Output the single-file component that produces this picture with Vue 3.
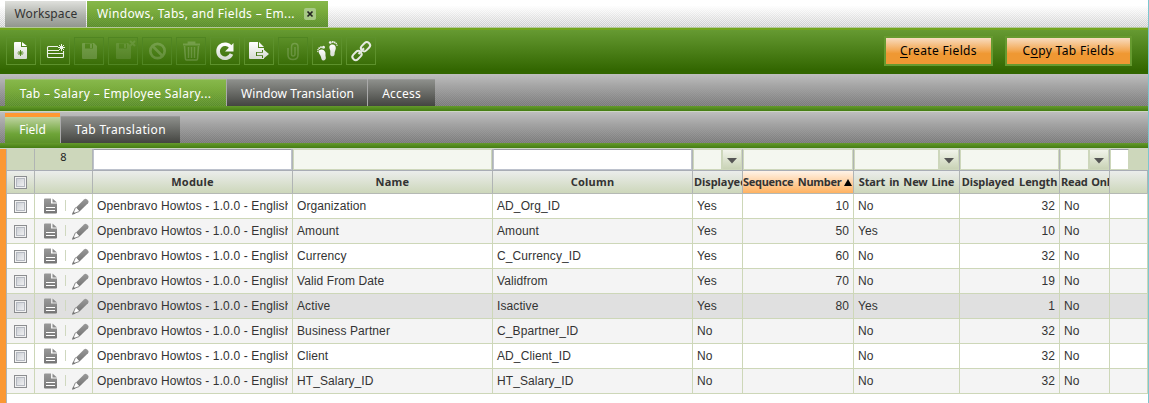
<script setup>
const tools = [
  { id: 'new', on: true },
  { id: 'newrow', on: true },
  { id: 'save', on: false },
  { id: 'saveclose', on: false },
  { id: 'undo', on: false },
  { id: 'trash', on: false },
  { id: 'refresh', on: true },
  { id: 'export', on: true },
  { id: 'attach', on: false },
  { id: 'audit', on: true },
  { id: 'link', on: true }
]
const columns = [
  { label: 'Module', filter: 'white', cls: 'h-module' },
  { label: 'Name', filter: 'off', cls: 'h-name' },
  { label: 'Column', filter: 'white', cls: 'h-column' },
  { label: 'Displayed', filter: 'select', cls: 'h-left' },
  { label: 'Sequence Number', filter: 'off', cls: 'h-sort' },
  { label: 'Start in New Line', filter: 'select', cls: 'h-start' },
  { label: 'Displayed Length', filter: 'off', cls: 'h-length' },
  { label: 'Read Only', filter: 'select', cls: 'h-left h-read' }
]
const mod = 'Openbravo Howtos - 1.0.0 - English'
const rows = [
  ['Organization', 'AD_Org_ID', 'Yes', '10', 'No', '32', 'No'],
  ['Amount', 'Amount', 'Yes', '50', 'Yes', '10', 'No'],
  ['Currency', 'C_Currency_ID', 'Yes', '60', 'No', '32', 'No'],
  ['Valid From Date', 'Validfrom', 'Yes', '70', 'No', '19', 'No'],
  ['Active', 'Isactive', 'Yes', '80', 'Yes', '1', 'No'],
  ['Business Partner', 'C_Bpartner_ID', 'No', '', 'No', '32', 'No'],
  ['Client', 'AD_Client_ID', 'No', '', 'No', '32', 'No'],
  ['HT_Salary_ID', 'HT_Salary_ID', 'No', '', 'No', '32', 'No']
]
</script>

<template>
  <div class="app">
    <svg class="defs" width="0" height="0">
      <defs>
        <linearGradient id="gw" x1="0" y1="0" x2="0" y2="1">
          <stop offset="0" stop-color="#fff" /><stop offset="1" stop-color="#d6dbd2" />
        </linearGradient>
        <linearGradient id="gg" x1="0" y1="0" x2="0" y2="1">
          <stop offset="0" stop-color="#999" /><stop offset="1" stop-color="#757575" />
        </linearGradient>
      </defs>
    </svg>
    <div class="strip top">
      <div class="tab workspace">Workspace</div>
      <div class="tab active main">
        <span>Windows, Tabs, and Fields – Em...</span>
        <svg class="close" width="12" height="12"><rect width="12" height="12" rx="2" fill="#a7c986" /><path d="M3.500 3.500l5 5M8.500 3.500l-5 5" stroke="#222" stroke-width="1.700" /></svg>
      </div>
    </div>
    <div class="toolbar">
      <div class="tools">
        <div v-for="t in tools" :key="t.id" class="tool" :class="{ off: !t.on, faint: t.id === 'saveclose' }">
          <svg width="28" height="26" viewBox="0 0 28 26">
            <g v-if="t.id === 'new'">
              <path d="M8 4h6v5h6v11q0 1-1 1H8q-1 0-1-1V5q0-1 1-1z" fill="url(#gw)" />
              <path d="M15 4l5 4h-5z" fill="#fff" />
              <path d="M13.500 12v6M10.500 15h6M11.500 13l4 4M15.500 13l-4 4" stroke="#47800f" stroke-width=".9" />
            </g>
            <g v-else-if="t.id === 'newrow'" fill="none" stroke="#eef2e9">
              <path d="M17 8.500H7.500q-1 0-1 1v9q0 1 1 1h14q1 0 1-1V13" stroke-width="1.100" />
              <path d="M6.500 12.500H18M6.500 15.500h16" stroke-width="1.100" />
              <path d="M20.500 6v7M17 9.500h7M18 7l5 5M23 7l-5 5" stroke-width="1" />
            </g>
            <g v-else-if="t.id === 'save' || t.id === 'saveclose'" fill="#fff">
              <path fill-rule="evenodd" d="M7 6q0-1 1-1h11l3 3v12q0 1-1 1H8q-1 0-1-1zM10 5.500v5h8v-5z" />
              <path d="M15 6h2v4h-2z" />
              <path v-if="t.id === 'saveclose'" d="M21 3l5 5M26 3l-5 5" stroke="#fff" stroke-width="2" />
            </g>
            <g v-else-if="t.id === 'undo'" fill="none" stroke="#fff" stroke-width="2.700">
              <circle cx="14.500" cy="13" r="7.200" /><path d="M9.500 8l10 10" />
            </g>
            <g v-else-if="t.id === 'trash'" fill="none" stroke="#fff">
              <path d="M6 6.500h17M11.500 6V4.500h6V6" stroke-width="1.800" />
              <path d="M7.500 8l1 13q0 1 1 1h10q1 0 1-1l1-13" stroke-width="1.600" />
              <path d="M11.500 9v11M14.500 9v11M17.500 9v11" stroke-width="1.500" />
            </g>
            <g v-else-if="t.id === 'refresh'">
              <path d="M20 9.500A7 7 0 1 0 20.500 16" fill="none" stroke="url(#gw)" stroke-width="3.600" />
              <path d="M22.500 5v8.500H14z" fill="#f7f8f6" />
            </g>
            <g v-else-if="t.id === 'export'" fill="url(#gw)">
              <path fill-rule="evenodd" d="M5 4h8v6h6v2h-2v2h-6v4h6v2h2v1H5q-1 0-1-1V5q0-1 1-1z" />
              <path d="M14 4l5 5h-5zM12 14.800h6V11l6 5-6 5v-3.700h-6z" />
            </g>
            <path v-else-if="t.id === 'attach'" d="M16 9v7q0 2-1.800 2T12.500 16V9q0-3.500 3.300-3.500T19 9v8q0 4.500-5 4.500T9 17V10" fill="none" stroke="#fff" stroke-width="1.500" />
            <g v-else-if="t.id === 'audit'" fill="url(#gw)">
              <path d="M17.500 7c3-1.300 5.500.5 5.300 3.200-.2 2-1.300 3.300-1.200 5.500.1 3.300-4.500 3.600-4.400.3 0-2 .5-3-.5-5-.6-1.600-.4-3.400.8-4z" />
              <path d="M6.500 12c2.500-1.500 5 0 5.800 2.300.5 1.700-.2 2.700.5 5 .8 3.200-3.600 4.700-4.400 1.500-.4-2-.6-2.700-1.800-4.500-1.200-1.700-1.400-3.500-.1-4.300z" />
              <circle cx="17.300" cy="4.600" r="1.400" /><circle cx="19.800" cy="4" r="1" /><circle cx="21.700" cy="4.500" r=".9" /><circle cx="23.200" cy="5.600" r=".8" /><circle cx="24" cy="7.300" r=".7" />
              <circle cx="10.500" cy="9.200" r="1.500" /><circle cx="8" cy="9.200" r="1" /><circle cx="6.200" cy="10.200" r=".9" /><circle cx="5" cy="11.800" r=".8" /><circle cx="4.800" cy="13.600" r=".7" />
            </g>
            <g v-else fill="none" stroke="#e6eae2" stroke-width="2">
              <rect x="-5" y="-3.200" width="10" height="6.400" rx="3" transform="translate(18.500 8.700) rotate(-45)" />
              <rect x="-5" y="-3.200" width="10" height="6.400" rx="3" transform="translate(10 17.500) rotate(-45)" />
              <path d="M11.500 16l5.500-5.700" />
            </g>
          </svg>
        </div>
      </div>
      <div class="actions">
        <button class="btn create"><u>C</u>reate Fields</button>
        <button class="btn copy">C<u>o</u>py Tab Fields</button>
      </div>
    </div>
    <div class="strip gray second">
      <div class="tab active salary">Tab – Salary – Employee Salary...</div>
      <div class="tab dark wt">Window Translation</div>
      <div class="tab dark access">Access</div>
    </div>
    <div class="bar"></div>
    <div class="strip gray third">
      <div class="tab field">Field</div>
      <div class="tab dark tt">Tab Translation</div>
    </div>
    <div class="bar"></div>
    <div class="body">
      <div class="accent"></div>
      <div class="grid">
        <div class="row filters">
          <div class="c"></div>
          <div class="c count">8</div>
          <div v-for="c in columns" :key="c.label" class="c" :class="'f-' + c.filter">
            <div class="input"></div>
            <div v-if="c.filter === 'select'" class="drop"><svg width="10" height="6"><path d="M0 0h10L5 5.500z" fill="#555" /></svg></div>
          </div>
          <div class="c f-end"><div class="input"></div></div>
        </div>
        <div class="row head">
          <div class="c chk"><i class="box"></i></div>
          <div class="c"></div>
          <div v-for="c in columns" :key="c.label" class="c" :class="c.cls">
            <span>{{ c.label }}</span>
            <svg v-if="c.cls === 'h-sort'" width="8" height="7"><path d="M0 7L4 0l4 7z" fill="#000" /></svg>
          </div>
          <div class="c last"></div>
        </div>
        <div v-for="(r, i) in rows" :key="i" class="row data" :class="{ alt: i % 2 === 1, hover: i === 4 }">
          <div class="c chk"><i class="box"></i></div>
          <div class="c icons">
            <svg width="58" height="24">
              <path d="M10 4.500h6v5h6v9q0 1-1 1H10q-1 0-1-1v-13q0-1 1-1z" fill="url(#gg)" />
              <path d="M17.500 4.500l4.500 4h-4.500z" fill="#8d8d8d" />
              <path d="M11 13.500h9M11 16.500h9" stroke="#fff" />
              <path d="M30.500 6v11" stroke="#cfd8bf" />
              <path d="M41 13.500l8-8q1.500-1.300 3 0l1 1q1.300 1.400 0 2.700L44.500 17.500z" fill="url(#gg)" />
              <path d="M40.500 13.500l-2.700 6.300 6.500-2.300" fill="#fff" stroke="#888" stroke-width="1" /><path d="M37 20.800l1.200-3.300 2.300 2.200z" fill="#777" />
            </svg>
          </div>
          <div class="c mod"><span>{{ mod }}</span></div>
          <div v-for="(v, j) in r" :key="j" class="c" :class="{ num: j === 3 || j === 5 }">{{ v }}</div>
          <div class="c"></div>
        </div>
      </div>
    </div>
    <div class="edge"></div>
  </div>
</template>

<style>
html, body { margin: 0; overflow: hidden; background: #fff; }
</style>
<style scoped>
* { box-sizing: border-box; }
.app { position: relative; width: 1149px; height: 403px; overflow: hidden; background: #fff; font-family: "Noto Sans", "Open Sans", sans-serif; font-size: 12px; color: #333; }
.defs { position: absolute; }
.edge { position: absolute; right: 0; top: 0; width: 1px; height: 403px; background: #7cc6cf; }
.strip { display: flex; padding-left: 5px; white-space: nowrap; }
.top { height: 28px; align-items: flex-end; gap: 1px; border-bottom: 1px solid #b5c79a;
  background: linear-gradient(#fff 20%, rgba(255,255,255,.1)), repeating-conic-gradient(#c4c4c4 0 25%, #e6e6e6 0 50%) 0 0 / 2px 2px; }
.top .tab { height: 26px; line-height: 25px; }
.tab { color: #fff; text-align: center; }
.workspace { width: 81px; padding-left: 1px; background: linear-gradient(#dfe0dc, #b0b3ad 55%, #92968e); color: #333; letter-spacing: .1px; }
.active { background: linear-gradient(#87b84b, rgba(122,172,60,.95) 40%, rgba(88,140,40,.55)), repeating-conic-gradient(#5b8a2c 0 25%, #7aa750 0 50%) 0 0 / 2px 2px; }
.main { width: 241px; display: flex; align-items: center; padding-left: 10px; letter-spacing: .35px; }
.main span { width: 207px; text-align: left; margin-top: -1px; }
.close { margin-top: -1px; }
.toolbar { height: 46px; display: flex; justify-content: space-between; align-items: flex-start; padding: 6px 17px 0 6px; border-top: 2px solid #73a51c; background: linear-gradient(#669a32, #326600 92%); }
.tools { display: flex; gap: 4px; padding-top: 1px; }
.tool { width: 30px; height: 28px; border: 1px solid #5d912c; }
.tool svg { display: block; }
.tool.off { border-color: #508522; }
.tool.off svg { opacity: .18; }
.tool.faint svg { opacity: .1; }
.actions { display: flex; gap: 12px; }
.btn { height: 30px; border: 2px solid #669a2f; padding: 0 0 2px; color: #000; font: 12px "Noto Sans", sans-serif; background: linear-gradient(#f8dcc0, #f3ab59 45%, #ef9833 60%); }
.btn u { text-underline-offset: 2px; }
.create { width: 109px; letter-spacing: .35px; }
.copy { width: 127px; letter-spacing: .35px; }
.gray { background: linear-gradient(#bebebe, rgba(165,165,165,.95) 40%, rgba(130,130,130,.5)), repeating-conic-gradient(#6c6c6c 0 25%, #8e8e8e 0 50%) 0 0 / 2px 2px; gap: 1px; }
.second { height: 32px; padding-top: 5px; }
.second .tab { height: 27px; line-height: 27px; border-top: 1px solid #999; }
.second .active { border-top-color: #9bc266; }
.dark { background: linear-gradient(#8d8f8b, #444541); border-top: 1px solid #999; box-shadow: -1px 0 #aaa; }
.salary { width: 221px; letter-spacing: .35px; }
.second .wt { width: 140px; letter-spacing: .1px; padding-left: 1px; }
.access { width: 67px; letter-spacing: .2px; }
.bar { height: 6px; background: linear-gradient(#659a2c, #447c12); border-bottom: 1px solid #cdd6c4; }
.third { height: 31px; padding-top: 1px; align-items: flex-end; }
.field { width: 55px; height: 30px; line-height: 26px; border-top: 4px solid #ff9933; background: linear-gradient(#bfd4a2, #6ea438 65%, #5c9129); }
.tt { width: 119px; height: 27px; line-height: 26px; letter-spacing: .35px; }
.body { display: flex; height: 254px; }
.accent { width: 6px; background: #fb9833; }
.grid { width: 1142px; border-left: 1px solid #b0b4b4; }
.row { display: grid; grid-template-columns: 28px 58px 200px 200px 200px 50px 111px 106px 100px 50px 38px; }
.c { min-width: 0; overflow: hidden; white-space: nowrap; border-right: 1px solid #cdd7b8; }
.filters { height: 22px; background: #cdd7bb; border-bottom: 1px solid #a9adb5; }
.filters .c { display: flex; border-color: #b0b4b4; }
.count { justify-content: center; font-size: 11px; line-height: 15px; color: #222; }
.input { flex: 1; background: #f4f7f0; border: 1px solid #cdd7bb; }
.f-white .input { background: #fff; border: 1px solid #bdc2cd; border-top-color: #9b9ea5; }
.drop { width: 18px; margin: 1px; background: linear-gradient(#f1f3ea, #c9d3b6); display: flex; align-items: center; justify-content: center; padding-top: 3px; }
.f-end .input { flex: none; width: 19px; background: #fff; border-top-color: #9b9ea5; }
.filters .c.f-end { border-right-color: #cdd7bb; }
.head { height: 23px; border-bottom: 1px solid #b5b9b4; background: linear-gradient(#ebedeb, #cdd7bb); font-size: 11px; font-weight: 700; line-height: 21px; color: #333; }
.head .c { border-color: #b0b4b4; text-align: center; letter-spacing: .25px; }
.head .h-left { text-align: left; padding-left: 1px; letter-spacing: -.05px; }
.head .h-read { letter-spacing: -.2px; word-spacing: 1px; }
.head .h-sort { display: flex; align-items: center; gap: 3px; letter-spacing: -.3px; word-spacing: 2px; background: linear-gradient(#fff3e8, #ffb261); }
.head .h-sort span { margin-top: -1px; }
.h-sort svg { flex: none; }
.head .h-start { letter-spacing: -.15px; word-spacing: 1.300px; }
.head .h-length { letter-spacing: -.1px; word-spacing: 2px; }
.chk { display: flex; align-items: center; justify-content: center; }
.box { width: 13px; height: 13px; border: 1px solid #8b8d90; background: linear-gradient(135deg, #c5c9d0, #f7f7f7); box-shadow: inset 0 0 0 1px #f2f2f2, inset 0 0 0 2px #b5b9c1; }
.data { height: 25px; border-bottom: 1px solid #cdd7b8; line-height: 24px; font-family: "Liberation Sans", Arial, sans-serif; letter-spacing: .1px; background: #fff; }
.data .c { padding: 0 4px; }
.data .chk, .data .icons { padding: 0; }
.data.alt { background: #f4f4f4; }
.data.hover { background: #e0e0e0; }
.data .num { text-align: right; }
.data .mod { letter-spacing: .13px; }
.mod span { display: block; overflow: hidden; }
.icons svg { display: block; }
</style>
